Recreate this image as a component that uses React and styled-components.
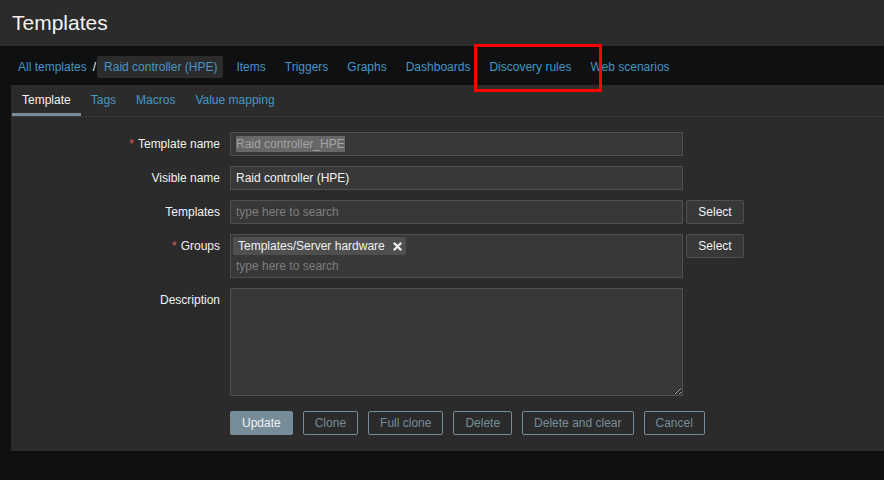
import React from "react";
import styled, { createGlobalStyle } from "styled-components";

const Global = createGlobalStyle`
  html, body { margin: 0; padding: 0; background: #0e1012; }
  body { font-family: "Liberation Sans", Arial, sans-serif; font-size: 12px; color: #f2f2f2; }
  * { box-sizing: border-box; }
`;

const Page = styled.div`
  position: relative;
  width: 884px;
  height: 480px;
  overflow: hidden;
  background: #0e1012;
  display: flex;
  flex-direction: column;
`;

const Header = styled.header`
  height: 46px;
  flex: none;
  background: #2b2b2b;
  padding-left: 12px;
  display: flex;
  align-items: center;
`;

const Title = styled.h1`
  margin: 0;
  font-size: 21px;
  font-weight: normal;
  line-height: 46px;
  color: #f2f2f2;
`;

const Nav = styled.nav`
  height: 39px;
  flex: none;
  display: flex;
  align-items: center;
  padding-left: 18px;
  padding-top: 3px;
`;

const NavLink = styled.a`
  color: #4796c4;
  text-decoration: none;
  padding: 0 ${(p) => (p.$first ? 0 : 9.5)}px;
  margin-left: ${(p) => (p.$lead ? 3.5 : 0)}px;
  white-space: nowrap;
  line-height: 22px;
`;

const Sep = styled.span`
  color: #f2f2f2;
  margin: 0 1px 0 6px;
  line-height: 22px;
`;

const Current = styled.a`
  color: #4796c4;
  background: #2b2b2b;
  padding: 0 6px 0 7px;
  line-height: 22px;
  height: 22px;
  border-radius: 2px;
  white-space: nowrap;
`;

const Card = styled.section`
  margin-left: 11px;
  background: #2b2b2b;
  display: flex;
  flex-direction: column;
  flex: none;
`;

const Tabs = styled.div`
  height: 32px;
  display: flex;
  padding-left: 1px;
  border-bottom: 1px solid #383838;
`;

const Tab = styled.a`
  padding: 0 10px;
  height: 31px;
  line-height: 31px;
  color: ${(p) => (p.$active ? "#f2f2f2" : "#4796c4")};
  border-bottom: 3px solid ${(p) => (p.$active ? "#768d99" : "transparent")};
  margin-bottom: -1px;
  white-space: nowrap;
`;

const Form = styled.div`
  display: grid;
  grid-template-columns: 209px 453px auto;
  column-gap: 10px;
  row-gap: 10px;
  padding: 15px 0 16px;
  align-items: start;
`;

const Label = styled.div`
  text-align: right;
  line-height: 24px;
  color: #f2f2f2;
  white-space: nowrap;
`;

const Req = styled.span`
  color: #e45959;
  margin-right: 4px;
`;

const Field = styled.div`
  height: ${(p) => p.$h || 24}px;
  background: #383838;
  border: 1px solid #4f4f4f;
  padding: 0 5px;
  line-height: 22px;
  color: ${(p) => (p.$placeholder ? "#7d7d7d" : "#f2f2f2")};
  white-space: nowrap;
`;

const Selected = styled.span`
  background: #676767;
  color: #a3a3a3;
  padding: 1px 0;
`;

const SideCell = styled.div`
  margin-left: -7px;
`;

const SelectBtn = styled.button`
  height: 24px;
  width: 58px;
  background: #383838;
  border: 1px solid #4f4f4f;
  color: #f2f2f2;
  font-family: inherit;
  font-size: 12px;
  padding: 0;
  border-radius: 2px;
`;

const Multi = styled.div`
  height: 44px;
  background: #383838;
  border: 1px solid #4f4f4f;
  padding: 2px 2px 0;
  display: flex;
  flex-direction: column;
  align-items: flex-start;
`;

const Tag = styled.span`
  display: inline-flex;
  align-items: center;
  gap: 8px;
  height: 18px;
  background: #4f4f4f;
  padding: 0 4px 0 5px;
  border-radius: 2px;
  color: #f2f2f2;
  white-space: nowrap;
`;

const Placeholder = styled.span`
  color: #7d7d7d;
  padding-left: 3px;
  line-height: 22px;
`;

const TextArea = styled.textarea`
  display: block;
  width: 453px;
  height: 108px;
  background: #383838;
  border: 1px solid #4f4f4f;
  color: #f2f2f2;
  font-family: inherit;
  font-size: 12px;
  resize: vertical;
  margin: 0;
  outline: none;
`;

const Buttons = styled.div`
  grid-column: 2 / 4;
  display: flex;
  gap: 10px;
  margin-top: 5px;
`;

const Btn = styled.button`
  height: 24px;
  padding: 0 11px;
  font-family: inherit;
  font-size: 12px;
  border-radius: 2px;
  border: 1px solid #768d99;
  background: ${(p) => (p.$primary ? "#768d99" : "transparent")};
  color: ${(p) => (p.$primary ? "#f2f2f2" : "#768d99")};
  white-space: nowrap;
`;

const Highlight = styled.div`
  position: absolute;
  left: 474px;
  top: 44px;
  width: 128px;
  height: 48px;
  border: 3px solid #ff0000;
  pointer-events: none;
`;

const XIcon = () => (
  <svg width="9" height="9" viewBox="0 0 9 9">
    <path d="M1.5 1.5 L7.5 7.5 M7.5 1.5 L1.5 7.5" stroke="#f2f2f2" strokeWidth="2.4" strokeLinecap="round" />
  </svg>
);

export default function App() {
  return (
    <Page>
      <Global />
      <Header>
        <Title>Templates</Title>
      </Header>
      <Nav>
        <NavLink $first>All templates</NavLink>
        <Sep>/</Sep>
        <Current>Raid controller (HPE)</Current>
        <NavLink $lead>Items</NavLink>
        <NavLink>Triggers</NavLink>
        <NavLink>Graphs</NavLink>
        <NavLink>Dashboards</NavLink>
        <NavLink>Discovery rules</NavLink>
        <NavLink>Web scenarios</NavLink>
      </Nav>
      <Card>
        <Tabs>
          <Tab $active>Template</Tab>
          <Tab>Tags</Tab>
          <Tab>Macros</Tab>
          <Tab>Value mapping</Tab>
        </Tabs>
        <Form>
          <Label><Req>*</Req>Template name</Label>
          <Field><Selected>Raid controller_HPE</Selected></Field>
          <div />

          <Label>Visible name</Label>
          <Field>Raid controller (HPE)</Field>
          <div />

          <Label>Templates</Label>
          <Field $placeholder>type here to search</Field>
          <SideCell><SelectBtn>Select</SelectBtn></SideCell>

          <Label><Req>*</Req>Groups</Label>
          <Multi>
            <Tag>Templates/Server hardware <XIcon /></Tag>
            <Placeholder>type here to search</Placeholder>
          </Multi>
          <SideCell><SelectBtn>Select</SelectBtn></SideCell>

          <Label>Description</Label>
          <TextArea defaultValue="" />
          <div />

          <div />
          <Buttons>
            <Btn $primary>Update</Btn>
            <Btn>Clone</Btn>
            <Btn>Full clone</Btn>
            <Btn>Delete</Btn>
            <Btn>Delete and clear</Btn>
            <Btn>Cancel</Btn>
          </Buttons>
        </Form>
      </Card>
      <Highlight />
    </Page>
  );
}
